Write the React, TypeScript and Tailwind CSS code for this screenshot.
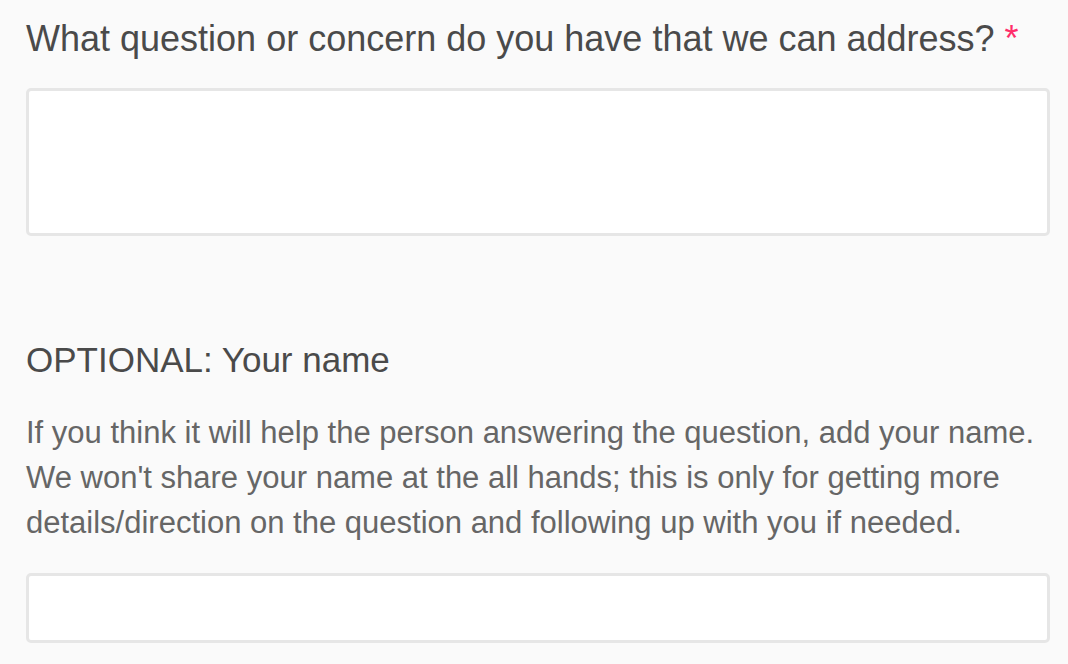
export default function App() {
  return (
    <div className="min-h-screen bg-[#fafafa] pl-[26px] pr-[18px] pt-[15px] font-['Liberation_Sans',Arial,sans-serif]">
      <label className="block text-[36px] leading-[48px] text-[#4a4a4a]">
        What question or concern do you have that we can address?{' '}
        <span className="text-[#ff2d6a]">*</span>
      </label>
      <textarea className="mt-[25px] block h-[148px] w-full resize-none rounded-[5px] border-[3px] border-[#e6e6e6] bg-white outline-none" />

      <label className="mt-[100px] block text-[35px] leading-[48px] text-[#4a4a4a]">OPTIONAL: Your name</label>
      <p className="mt-[26px] whitespace-nowrap text-[31px] leading-[45px] text-[#666666]">
        If you think it will help the person answering the question, add your name.
        <br />
        We won't share your name at the all hands; this is only for getting more
        <br />
        details/direction on the question and following up with you if needed.
      </p>
      <input type="text" className="mt-[28px] block h-[70px] w-full rounded-[5px] border-[3px] border-[#e6e6e6] bg-white outline-none" />
    </div>
  );
}
